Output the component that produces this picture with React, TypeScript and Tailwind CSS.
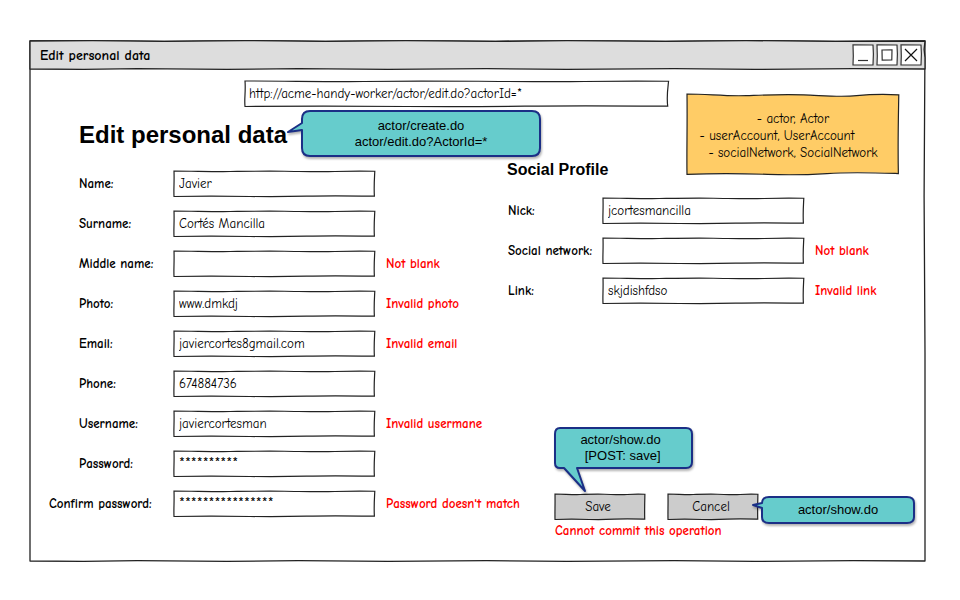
import React from "react";

const hand = 'font-["Comic_Neue","Comic_Sans_MS",Lato,sans-serif]';

/** Wavy hand-drawn rectangle behind the content of its nearest relative parent. */
function Sketch({ fill = "#fff" }: { fill?: string }) {
  return (
    <svg
      aria-hidden="true"
      className="pointer-events-none absolute inset-0 h-full w-full overflow-visible"
      viewBox="0 0 100 100"
      preserveAspectRatio="none"
    >
      <path
        d="M0 0 C10 0 18 3 28 2 S45 0 55 1 S72 4 80 2 S92 0 99.9 1 C99.7 30 99.4 60 99.7 97 C88 96 78 95 66 97 S48 99 38 98 S18 96 0 98 C-0.2 70 0.2 40 0 0 Z"
        fill={fill}
        stroke="#222"
        strokeWidth="1.2"
        vectorEffect="non-scaling-stroke"
      />
    </svg>
  );
}

/** Outline of the window or its title bar; `wave` is the swing of the long edges in percent of the height. */
function WindowSketch({ fill = "none", wave }: { fill?: string; wave: number }) {
  const edge = (y: number, xs: number[]) =>
    xs.map((x, i) => `L${x} ${y + (i % 2 ? wave : -wave)}`).join(" ");
  return (
    <svg
      aria-hidden="true"
      className="pointer-events-none absolute inset-0 h-full w-full overflow-visible"
      viewBox="0 0 100 100"
      preserveAspectRatio="none"
    >
      <path
        d={`M0 0 ${edge(0, [7, 15, 24, 33, 42, 52, 60, 71, 80, 90])} L100 0 L99.9 30 L100 60 L100 100 ${edge(100, [92, 81, 72, 60, 51, 40, 30, 22, 12, 6])} L0 100 L0 60 L0 30 Z`}
        fill={fill}
        stroke="#222"
        strokeWidth="1.3"
        strokeLinejoin="round"
        vectorEffect="non-scaling-stroke"
      />
    </svg>
  );
}

type FieldProps = {
  id: string;
  label: string;
  value: string;
  error?: string;
  wide?: boolean;
  masked?: boolean;
};

function Field({ id, label, value, error, wide, masked }: FieldProps) {
  return (
    <div className="flex h-[26px] items-center">
      <label
        htmlFor={id}
        className={
          wide ? "-ml-[30px] w-[125px] shrink-0 font-bold" : "w-[95px] shrink-0 font-bold"
        }
      >
        {label}
      </label>
      <div className="relative h-[26px] w-[201px] shrink-0">
        <Sketch />
        <input
          id={id}
          type="text"
          defaultValue={value}
          className={`relative block h-6 w-full bg-transparent px-[5px] outline-none ${masked ? "text-[15px]" : ""}`}
        />
      </div>
      {error && <p className="ml-[11px] whitespace-nowrap font-bold text-[#ff0000]">{error}</p>}
    </div>
  );
}

const personal: FieldProps[] = [
  { id: "name", label: "Name:", value: "Javier" },
  { id: "surname", label: "Surname:", value: "Cortés Mancilla" },
  { id: "middle", label: "Middle name:", value: "", error: "Not blank" },
  { id: "photo", label: "Photo:", value: "www.dmkdj", error: "Invalid photo" },
  { id: "email", label: "Email:", value: "javiercortes8gmail.com", error: "Invalid email" },
  { id: "phone", label: "Phone:", value: "674884736" },
  { id: "username", label: "Username:", value: "javiercortesman", error: "Invalid usermane" },
  { id: "password", label: "Password:", value: "**********", masked: true },
  {
    id: "confirm",
    label: "Confirm password:",
    value: "****************",
    error: "Password doesn't match",
    wide: true,
    masked: true,
  },
];

const social: FieldProps[] = [
  { id: "nick", label: "Nick:", value: "jcortesmancilla" },
  { id: "network", label: "Social network:", value: "", error: "Not blank" },
  { id: "link", label: "Link:", value: "skjdishfdso", error: "Invalid link" },
];

type BubbleProps = { w: number; h: number; path: string };

/** Speech bubble drawing; the path may reach outside the box to form the tail. */
function Bubble({ w, h, path }: BubbleProps) {
  return (
    <svg
      aria-hidden="true"
      className="absolute top-0 left-0 overflow-visible drop-shadow-[1px_2px_1px_rgba(0,0,0,0.3)]"
      width={w}
      height={h}
      viewBox={`0 0 ${w} ${h}`}
    >
      <path d={path} fill="#66cccc" stroke="#1b2f86" strokeWidth="2" strokeLinejoin="round" />
    </svg>
  );
}

function WindowButton({ label, children }: { label: string; children: React.ReactNode }) {
  return (
    <button type="button" aria-label={label} className="block h-[22px] w-[22px]">
      <svg viewBox="0 0 22 22" className="h-full w-full" fill="none" stroke="#333" strokeWidth="1.2">
        <path d="M1 0.8 L21 1 L21.4 10 L21 21 L1 20.8 L1.3 12 Z" fill="#fff" />
        {children}
      </svg>
    </button>
  );
}

export default function App() {
  return (
    <main className="min-h-screen bg-white pt-[41px] pr-[35px] pb-[38px] pl-[30px]">
      <div className={`relative pb-[22px] text-[13px] leading-4 text-black ${hand}`}>
        <WindowSketch wave={0.07} />
        <header className="relative flex h-7 items-center justify-between pr-[3px] pl-2.5">
          <WindowSketch fill="#dddddd" wave={1.6} />
          <span className="relative pt-0.5 text-sm font-bold">Edit personal data</span>
          <div className="relative flex gap-0.5">
            <WindowButton label="Minimize">
              <path d="M6 16.5 H16" />
            </WindowButton>
            <WindowButton label="Maximize">
              <path d="M6 6 L16 5.8 L15.8 16 L6.2 16.2 Z" />
            </WindowButton>
            <WindowButton label="Close">
              <path d="M5 5 L17 17 M17 5 L5 17" stroke="#111" />
            </WindowButton>
          </div>
        </header>

        <div className="relative mt-3 ml-[215px] h-[26px] w-[424px]">
          <Sketch />
          <input
            type="text"
            aria-label="Address"
            defaultValue="http://acme-handy-worker/actor/edit.do?actorId=*"
            className="relative block h-6 w-full bg-transparent px-1 outline-none"
          />
        </div>

        <div className="flex pl-[49px]">
          <section className="w-[428px] shrink-0 pt-3">
            <div className="relative w-fit">
              <h1 className="whitespace-nowrap font-['Liberation_Sans',Arial,sans-serif] text-2xl leading-8 font-bold">
                Edit personal data
              </h1>
              <div className="absolute -top-2 left-[223px] z-10 flex h-[45px] w-[238px] items-center justify-center text-center font-['Liberation_Sans',Arial,sans-serif] text-[13px] leading-4">
                <Bubble
                  w={238}
                  h={45}
                  path="M8 0 H230 Q238 0 238 8 V37 Q238 45 230 45 H8 Q0 45 0 37 V19 L-14 21 L0 12 V8 Q0 0 8 0 Z"
                />
                <p className="relative">
                  actor/create.do
                  <br />
                  actor/edit.do?ActorId=*
                </p>
              </div>
            </div>
            <div className="mt-5 flex flex-col gap-3.5">
              {personal.map((f) => (
                <Field key={f.id} {...f} />
              ))}
            </div>
          </section>

          <section className="min-w-0 flex-1 pt-[51px]">
            <h2 className="font-['Liberation_Sans',Arial,sans-serif] text-base leading-6 font-bold">
              Social Profile
            </h2>
            <div className="mt-4 flex flex-col gap-3.5 pl-px">
              {social.map((f) => (
                <Field key={f.id} {...f} />
              ))}
            </div>

            <div className="mt-[190px] flex gap-[23px] pl-12">
              <div className="relative">
                <button type="button" className="relative block h-[26px] w-[90px] pr-1">
                  <Sketch fill="#cccccc" />
                  <span className="relative">Save</span>
                </button>
                <div className="absolute bottom-[52px] left-0 flex h-10 w-[137px] items-center justify-center pr-1.5 font-['Liberation_Sans',Arial,sans-serif] text-[13px] leading-4">
                  <Bubble
                    w={137}
                    h={40}
                    path="M5 0 H131 Q137 0 137 6 V34 Q137 40 131 40 H22 L30 63 L9 40 H5 Q0 40 0 35 V6 Q0 0 5 0 Z"
                  />
                  <p className="relative text-right">
                    actor/show.do
                    <br />
                    [POST: save]
                  </p>
                </div>
              </div>
              <div className="relative">
                <button type="button" className="relative block h-[26px] w-[90px] pr-1">
                  <Sketch fill="#cccccc" />
                  <span className="relative">Cancel</span>
                </button>
                <div className="absolute top-[3px] left-[94px] flex h-[26px] w-[152px] items-center justify-center font-['Liberation_Sans',Arial,sans-serif] text-[13px] leading-4">
                  <Bubble
                    w={152}
                    h={26}
                    path="M7 0 H145 Q152 0 152 6 V20 Q152 26 145 26 H7 Q0 26 0 20 V11 L-9 8 L0 6 Q0 0 7 0 Z"
                  />
                  <p className="relative">actor/show.do</p>
                </div>
              </div>
            </div>
            <p className="mt-[3px] pl-12 font-bold text-[#ff0000]">Cannot commit this operation</p>
          </section>
        </div>

        <aside className="absolute top-[53px] right-[26px] flex h-[82px] w-[212px] flex-col justify-center text-center leading-[17px]">
          <Sketch fill="#ffcc66" />
          <p className="relative">- actor, Actor</p>
          <p className="relative pr-8">- userAccount, UserAccount</p>
          <p className="relative">- socialNetwork, SocialNetwork</p>
        </aside>
      </div>
    </main>
  );
}
